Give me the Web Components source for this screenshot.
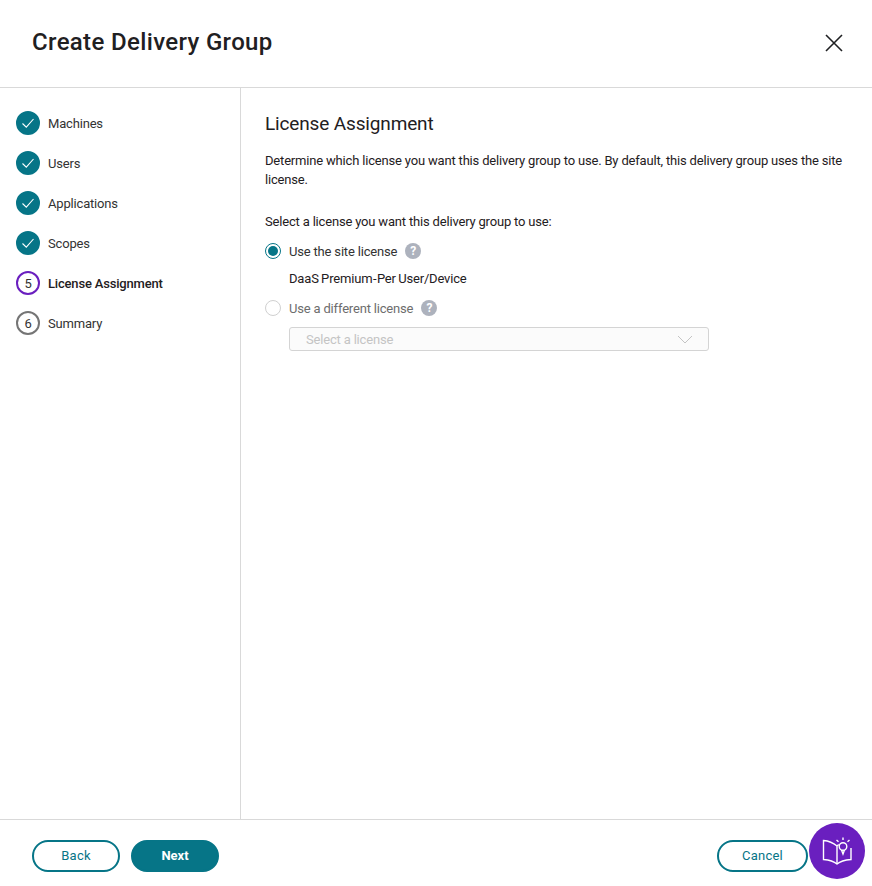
<!DOCTYPE html>
<html>
<head>
<meta charset="utf-8">
<style>
  html, body { margin: 0; height: 100%; background: #fff; }
  body { font-family: Roboto, "Liberation Sans", sans-serif; color: #1f2022; }
</style>
</head>
<body>
<delivery-dialog>
  <span slot="title">Create Delivery Group</span>
  <wizard-step slot="steps" state="done">Machines</wizard-step>
  <wizard-step slot="steps" state="done">Users</wizard-step>
  <wizard-step slot="steps" state="done">Applications</wizard-step>
  <wizard-step slot="steps" state="done">Scopes</wizard-step>
  <wizard-step slot="steps" state="current" num="5">License Assignment</wizard-step>
  <wizard-step slot="steps" num="6">Summary</wizard-step>
  <license-panel></license-panel>
  <pill-button slot="left">Back</pill-button>
  <pill-button slot="left" primary>Next</pill-button>
  <pill-button slot="right" style="width:91px">Cancel</pill-button>
</delivery-dialog>
<help-fab></help-fab>

<script>
  class DeliveryDialog extends HTMLElement {
    constructor(){ super(); const root = this.attachShadow({mode:'open'});
      root.innerHTML = `
        <style>
          :host { display: flex; flex-direction: column; height: 886px; width: 872px; }
          header { flex: none; box-sizing: border-box; border-bottom: 1px solid #d9d9d9; display: flex; align-items: center; justify-content: space-between; padding: 0 28px 0 32px; height: 88px; }
          h1 { margin: 0 0 4px; font-size: 24px; font-weight: 500; letter-spacing: .35px; color: #1f2022; }
          .close { display: block; margin-bottom: 1px; }
          .mid { flex: 1; display: flex; min-height: 0; }
          nav { width: 241px; flex: none; box-sizing: border-box; border-right: 1px solid #d9d9d9; padding: 23px 0 0 16px; display: flex; flex-direction: column; gap: 16px; }
          main { flex: 1; padding: 24px 24px 0; }
          footer { box-sizing: border-box; height: 67px; flex: none; border-top: 1px solid #d9d9d9; display: flex; justify-content: space-between; align-items: flex-start; padding: 20px 64px 0 32px; }
          .group { display: flex; gap: 11px; }
        </style>
        <header><h1><slot name="title"></slot></h1>
          <svg class="close" width="20" height="20" viewBox="0 0 20 20"><path d="M2 2 L18 18 M18 2 L2 18" stroke="#1f2022" stroke-width="1.6" fill="none"/></svg>
        </header>
        <div class="mid"><nav><slot name="steps"></slot></nav><main><slot></slot></main></div>
        <footer><div class="group"><slot name="left"></slot></div><div class="group"><slot name="right"></slot></div></footer>`;
    }
  }
  customElements.define('delivery-dialog', DeliveryDialog);

  class WizardStep extends HTMLElement {
    constructor(){ super(); const root = this.attachShadow({mode:'open'});
      const state = this.getAttribute('state') || '';
      const inner = state === 'done'
        ? '<svg width="14" height="14" viewBox="0 0 14 14"><path d="M1.5 7.5 L5.3 11.2 L12.5 3" stroke="#fff" stroke-width="1.1" fill="none"/></svg>'
        : this.getAttribute('num');
      root.innerHTML = `
        <style>
          :host { display: flex; align-items: center; gap: 8px; height: 24px; font-size: 13px; color: #333; letter-spacing: -.18px; }
          .dot { width: 24px; height: 24px; box-sizing: border-box; border-radius: 50%; display: flex; align-items: center; justify-content: center; border: 2px solid #757575; font-size: 13px; color: #333; }
          :host([state=done]) .dot { background: #067587; border-color: #067587; }
          :host([state=current]) .dot { border-color: #6a1fbf; }
          :host([state=current]) { font-weight: 500; color: #1f2022; }
          :host([state=current]) .dot { font-weight: 400; }
        </style>
        <span class="dot">${inner}</span><span><slot></slot></span>`;
    }
  }
  customElements.define('wizard-step', WizardStep);

  class HelpIcon extends HTMLElement {
    constructor(){ super(); const root = this.attachShadow({mode:'open'});
      root.innerHTML = `
        <style>
          :host { display: inline-flex; width: 16px; height: 16px; border-radius: 50%; background: #adb2bd; color: #fff; align-items: center; justify-content: center; font-size: 12px; font-weight: 700; }
        </style>?`;
    }
  }
  customElements.define('help-icon', HelpIcon);

  class RadioRow extends HTMLElement {
    constructor(){ super(); const root = this.attachShadow({mode:'open'});
      root.innerHTML = `
        <style>
          :host { display: flex; align-items: center; height: 16px; gap: 8px; font-size: 13px; color: #333; letter-spacing: -.18px; }
          .r { width: 16px; height: 16px; box-sizing: border-box; border-radius: 50%; border: 1px solid #d0d0d0; background: #fff; display: flex; align-items: center; justify-content: center; }
          :host([checked]) .r { border: 1.5px solid #067587; }
          :host([checked]) .r::after { content: ""; width: 10px; height: 10px; border-radius: 50%; background: #067587; }
          :host([disabled]) { color: #6d6d6d; }
        </style>
        <span class="r"></span><span class="t"><slot></slot></span><help-icon></help-icon>`;
    }
  }
  customElements.define('radio-row', RadioRow);

  class LicensePanel extends HTMLElement {
    constructor(){ super(); const root = this.attachShadow({mode:'open'});
      root.innerHTML = `
        <style>
          :host { display: block; font-size: 13px; color: #1f2022; letter-spacing: -.18px; }
          h2 { margin: 0; font-size: 19px; line-height: 24px; font-weight: 400; letter-spacing: -.15px; color: #1f2022; }
          p { margin: 0; line-height: 19px; }
          .desc { margin-top: 15px; }
          .ask { margin-top: 23px; }
          .site { margin: 10px 0 0 24px; word-spacing: -.6px; }
          .dash { word-spacing: -2.5px; }
          radio-row.first { margin-top: 12px; }
          radio-row.second { margin-top: 12px; }
          .select { margin: 11px 0 0 24px; width: 420px; height: 24px; box-sizing: border-box; border: 1px solid #d4d4d4; border-radius: 3px; background: #fbfbfb; display: flex; align-items: center; justify-content: space-between; padding: 0 15px 0 16px; color: #c4c4c4; }
        </style>
        <h2>License Assignment</h2>
        <p class="desc">Determine which license you want this delivery group to use. By default, this delivery group uses the site license.</p>
        <p class="ask">Select a license you want this delivery group to use:</p>
        <radio-row class="first" checked>Use the site license</radio-row>
        <p class="site">DaaS Premium<span class="dash"> - </span>Per User/Device</p>
        <radio-row class="second" disabled>Use a different license</radio-row>
        <div class="select"><span>Select a license</span>
          <svg width="16" height="9" viewBox="0 0 16 9"><path d="M1 1 L8 8 L15 1" stroke="#c4c4c4" fill="none"/></svg>
        </div>`;
    }
  }
  customElements.define('license-panel', LicensePanel);

  class PillButton extends HTMLElement {
    constructor(){ super(); const root = this.attachShadow({mode:'open'});
      root.innerHTML = `
        <style>
          :host { display: flex; align-items: center; justify-content: center; box-sizing: border-box; width: 88px; height: 32px; padding-bottom: 1px; border: 2px solid #067587; border-radius: 16px; color: #067587; font-size: 13px; font-weight: 400; letter-spacing: .2px; }
          :host([primary]) { background: #067587; color: #fff; font-weight: 700; letter-spacing: 0; }
        </style><slot></slot>`;
    }
  }
  customElements.define('pill-button', PillButton);

  class HelpFab extends HTMLElement {
    constructor(){ super(); const root = this.attachShadow({mode:'open'});
      root.innerHTML = `
        <style>
          :host { position: fixed; left: 809px; top: 823px; width: 56px; height: 56px; border-radius: 50%; background: #6a1fbf; display: flex; align-items: center; justify-content: center; }
        </style>
        <svg width="32" height="32" viewBox="0 0 32 32" fill="none" stroke="#fff" stroke-width="1.4">
          <path d="M16 11 C13 8.5 8 6 2.5 5.5 V24.5 C8 25 13 26.5 16 29 C19 26.5 24 25 30 24.5 V13"/>
          <path d="M16 11 V29 M16 11 C16.6 10.5 17 10 17.8 9.6"/>
          <circle cx="22" cy="11.5" r="3.8"/>
          <path d="M20.5 15 L22 19 L23.5 15"/>
          <path d="M22 2.5 V5 M15.5 5 L17.5 6.8 M28.5 5 L26.5 6.8"/>
        </svg>`;
    }
  }
  customElements.define('help-fab', HelpFab);
</script>
</body>
</html>
